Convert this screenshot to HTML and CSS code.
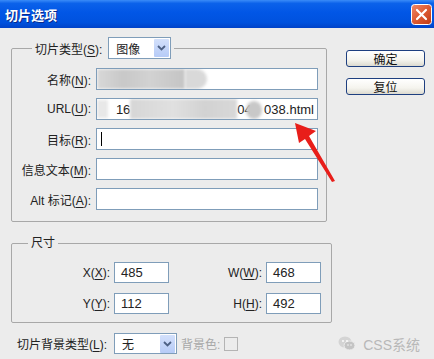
FILE: index.html
```html
<!DOCTYPE html>
<html>
  <head>
    <title>切片选项</title>
    <link rel="stylesheet" href="styles.css">
  </head>
  <body>
    <div class="dialog">
      <div class="titlebar">
        <span class="title">切片选项</span>
        <span class="close">
          <svg width="21" height="21" viewBox="0 0 21 21">
            <defs>
              <linearGradient id="cg" x1="0" y1="0" x2="1" y2="1">
                <stop offset="0" stop-color="#f08a6a" />
                <stop offset="0.5" stop-color="#dd5a32" />
                <stop offset="1" stop-color="#c03a14" />
              </linearGradient>
            </defs>
            <rect x="0.5" y="0.5" width="20" height="20" rx="3" fill="url(#cg)" stroke="#ffffff" />
            <path d="M6 6 L15 15 M15 6 L6 15" stroke="#ffffff" stroke-width="2.2" stroke-linecap="round" />
          </svg>
        </span>
      </div>

      <div class="content">
        <div class="main">
          <div class="left">
            <fieldset class="group group-slice">
              <legend>
                <span class="legend-label">切片类型(<u>S</u>):</span>
                <span class="select select-type">
                  <span class="select-text">图像</span>
                  <span class="drop">
                    <svg width="9" height="6" viewBox="0 0 9 6"><path d="M1 1 L4.5 4.5 L8 1" fill="none" stroke="#4d6185" stroke-width="1.8" /></svg>
                  </span>
                </span>
              </legend>
              <div class="form-grid">
                <label>名称(<u>N</u>):</label>
                <div class="field">
                  <span class="blur blur-name"></span>
                  <span class="blur blur-name-end"></span>
                </div>

                <label>URL(<u>U</u>):</label>
                <div class="field field-url">
                  <span class="blur blur-dot"></span>
                  <span class="url-part">16</span>
                  <span class="blur blur-url"></span>
                  <span class="url-part">04</span>
                  <span class="blur blur-round"></span>
                  <span class="url-part">038.html</span>
                </div>

                <label>目标(<u>R</u>):</label>
                <div class="field"><span class="caret"></span></div>

                <label>信息文本(<u>M</u>):</label>
                <div class="field"></div>

                <label>Alt 标记(<u>A</u>):</label>
                <div class="field"></div>
              </div>
            </fieldset>

            <fieldset class="group group-size">
              <legend>尺寸</legend>
              <div class="size-grid">
                <label>X(<u>X</u>):</label>
                <div class="field small">485</div>
                <label>W(<u>W</u>):</label>
                <div class="field small">468</div>

                <label>Y(<u>Y</u>):</label>
                <div class="field small">112</div>
                <label>H(<u>H</u>):</label>
                <div class="field small">492</div>
              </div>
            </fieldset>
          </div>

          <div class="buttons">
            <button class="btn">确定</button>
            <button class="btn">复位</button>
          </div>
        </div>

        <div class="bottom-row">
          <span class="bottom-label">切片背景类型(<u>L</u>):</span>
          <span class="select select-bg">
            <span class="select-text">无</span>
            <span class="drop">
              <svg width="9" height="6" viewBox="0 0 9 6"><path d="M1 1 L4.5 4.5 L8 1" fill="none" stroke="#4d6185" stroke-width="1.8" /></svg>
            </span>
          </span>
          <span class="disabled-label">背景色:</span>
          <span class="color-box"></span>

          <span class="watermark">
            <svg width="18" height="15" viewBox="0 0 18 15">
              <ellipse cx="7" cy="6" rx="6.5" ry="5.5" fill="#d4d4d4" />
              <ellipse cx="11.5" cy="9.5" rx="5.5" ry="4.5" fill="#c4c4c4" stroke="#ececec" stroke-width="1" />
              <circle cx="5" cy="5" r="0.9" fill="#ffffff" />
              <circle cx="9" cy="5" r="0.9" fill="#ffffff" />
              <circle cx="10" cy="9" r="0.7" fill="#ffffff" />
              <circle cx="13" cy="9" r="0.7" fill="#ffffff" />
            </svg>
            <span class="watermark-text">CSS系统</span>
          </span>
        </div>
      </div>

      <svg class="arrow" width="434" height="359" viewBox="0 0 434 359">
        <polygon points="295,123 316,131 309,136 335,181 332,182 305,139 299,143" fill="#e81e1a" />
      </svg>
    </div>
  </body>
</html>
```

FILE: styles.css
```css
body {
  margin: 0;
  font-family: "Liberation Sans", "Noto Sans CJK SC", sans-serif;
  font-size: 12px;
  color: #222;
  background-color: #ececec;
}

.dialog {
  position: relative;
  width: 434px;
  height: 359px;
  background-color: #ececec;
  overflow: hidden;
}

/* title bar */
.titlebar {
  height: 28px;
  display: flex;
  align-items: center;
  justify-content: space-between;
  padding: 0 2px 0 5px;
  background: linear-gradient(to bottom, #3a8cf8 0%, #0b62ea 12%, #0156e6 45%, #0052de 80%, #0143c8 100%);
}

.title {
  color: #fff;
  font-weight: bold;
  font-size: 13px;
  font-family: "Noto Sans CJK SC", sans-serif;
  text-shadow: 1px 1px 0 #0a2a8a;
}

.close {
  display: flex;
  margin-top: 1px;
}

/* content */
.content {
  padding: 9px 14px 0 11px;
}

.main {
  display: flex;
  align-items: flex-start;
  gap: 18px;
}

.left {
  width: 317px;
}

.group {
  margin: 0;
  border: 1px solid #a8a8a8;
  border-radius: 2px;
}

.group-slice {
  width: 316px;
  box-sizing: border-box;
  padding: 9px 7px 11px 0;
}

.group-slice legend {
  display: flex;
  align-items: center;
  gap: 6px;
  margin-left: 20px;
  padding: 0 3px;
}

.group-size {
  width: 317px;
  box-sizing: border-box;
  margin-top: 13px;
  padding: 11px 10px 8px 0;
}

.group-size legend {
  margin-left: 16px;
  padding: 0 3px;
  line-height: 16px;
}

.form-grid {
  display: grid;
  grid-template-columns: 79px 222px;
  column-gap: 5px;
  row-gap: 8px;
  align-items: center;
}

.form-grid label,
.size-grid label {
  text-align: right;
  white-space: nowrap;
}

u {
  text-decoration: underline;
  text-underline-offset: 2px;
}

.field {
  height: 22px;
  box-sizing: border-box;
  border: 1px solid #7f9db9;
  background-color: #fff;
  display: flex;
  align-items: center;
  padding: 0 4px;
  overflow: hidden;
  position: relative;
}

.field.small {
  height: 21px;
  width: 55px;
  padding: 0 6px;
  color: #222;
  font-size: 13px;
}

.caret {
  width: 1px;
  height: 14px;
  background-color: #000;
}

/* blurred parts of the screenshot */
.blur {
  display: block;
  background-color: #cfcfcf;
  filter: blur(1.5px);
}

.blur-name {
  width: 88px;
  height: 20px;
  margin-left: -4px;
  background: linear-gradient(to right, #d8d8d8, #c8c8c8 30%, #d2d2d2 60%, #c4c4c4);
}

.blur-name-end {
  width: 22px;
  height: 20px;
  border-radius: 0 10px 10px 0;
  background-color: #d9d9d9;
}

.field-url {
  padding: 0 3px 0 0;
  font-size: 13px;
}

.blur-dot {
  width: 12px;
  height: 18px;
  margin-right: 8px;
  background-color: #e8e8e8;
}

.url-part {
  white-space: nowrap;
}

.blur-url {
  width: 118px;
  height: 20px;
  background: linear-gradient(to right, #d6d6d6, #e0e0e0 40%, #d2d2d2 70%, #d8d8d8);
}

.blur-round {
  width: 18px;
  height: 18px;
  border-radius: 50%;
  background-color: #c8c8c8;
  margin: 2px 2px 0 -6px;
}

.size-grid {
  display: grid;
  grid-template-columns: 98px 55px 89px 55px;
  column-gap: 4px;
  row-gap: 10px;
  align-items: center;
}

.size-grid .field.small {
  margin-right: -4px;
}

/* selects */
.select {
  display: flex;
  align-items: center;
  height: 22px;
  box-sizing: border-box;
  border: 1px solid #7f9db9;
  background-color: #fff;
}

.select-text {
  flex: 1;
  padding-left: 7px;
  font-family: "Noto Sans CJK SC", sans-serif;
}

.drop {
  display: flex;
  align-items: center;
  justify-content: center;
  width: 15px;
  height: 18px;
  margin-right: 1px;
  background: linear-gradient(to bottom, #d3e0fb, #b6cbf7);
  border-radius: 1px;
}

.select-type {
  width: 63px;
}

.select-bg {
  width: 63px;
  height: 21px;
}

/* buttons */
.buttons {
  display: flex;
  flex-direction: column;
  gap: 11px;
  margin-top: 13px;
}

.btn {
  width: 79px;
  height: 17px;
  padding: 0;
  border: 1px solid #1e3f80;
  border-radius: 3px;
  background: linear-gradient(to bottom, #ffffff 0%, #f5f4ee 60%, #dcdad0 100%);
  font-family: "Noto Sans CJK SC", sans-serif;
  font-size: 12px;
  line-height: 15px;
  color: #111;
}

/* bottom row */
.bottom-row {
  display: flex;
  align-items: center;
  margin-top: 10px;
  padding-left: 6px;
}

.bottom-label {
  width: 94px;
  margin-right: 3px;
  white-space: nowrap;
}

.disabled-label {
  color: #a8a8a8;
  margin-left: 4px;
}

.color-box {
  width: 12px;
  height: 12px;
  border: 1px solid #b4b4b4;
  margin-left: 4px;
}

.watermark {
  display: flex;
  align-items: center;
  gap: 7px;
  margin-left: auto;
}

.watermark-text {
  color: #b8b8b8;
  font-size: 14px;
}

.arrow {
  position: absolute;
  left: 0;
  top: 0;
  pointer-events: none;
}
```
